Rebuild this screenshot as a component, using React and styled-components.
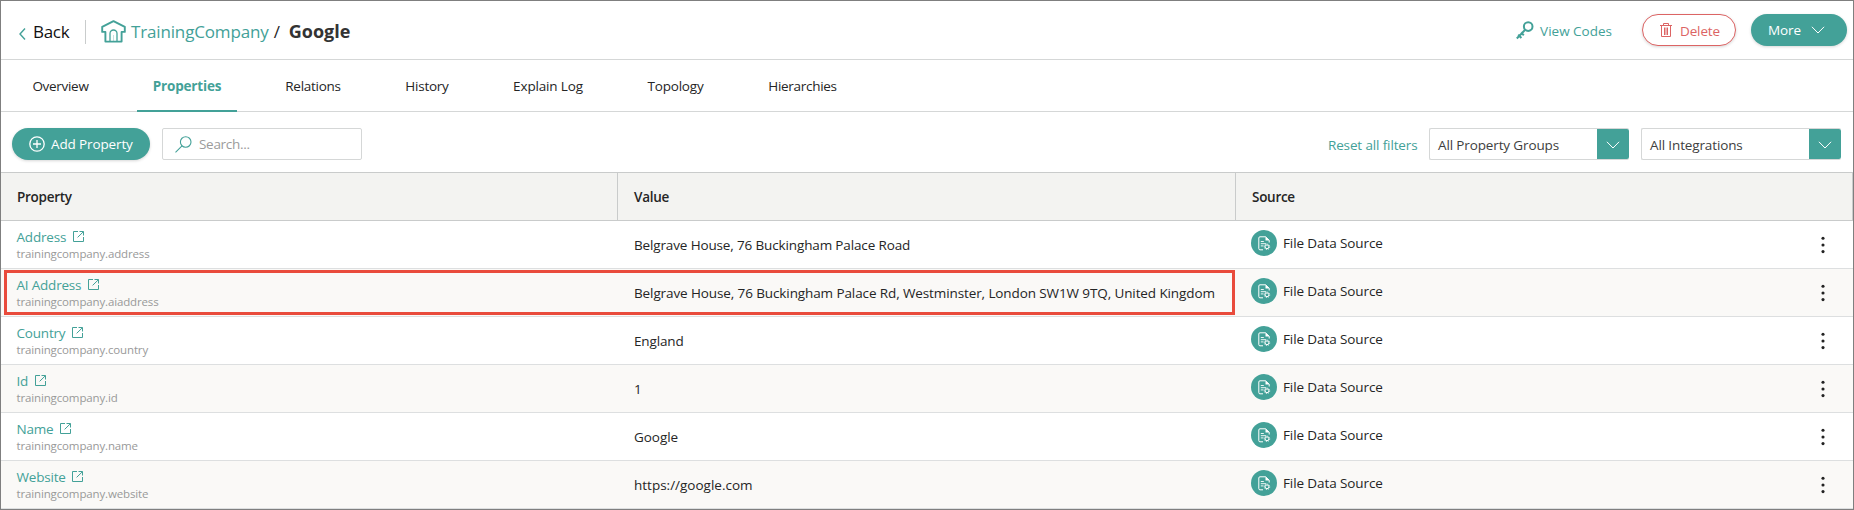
import React from "react";
import styled, { createGlobalStyle, css } from "styled-components";

const teal = "#43a198";
const line = "#d5d7d7";

const GlobalStyle = createGlobalStyle`
  * { box-sizing: border-box; }
  body {
    margin: 0;
    background: #fff;
    color: #252525;
    font-family: "Open Sans", "Noto Sans", sans-serif;
    font-size: 13.5px;
    letter-spacing: -0.13px;
  }
  button, input { font: inherit; letter-spacing: inherit; }
  svg { display: block; flex: none; }
`;

const Page = styled.div`
  display: flex;
  flex-direction: column;
  height: 510px;
  border: 1px solid #7f7f7f;
  overflow: hidden;
  white-space: nowrap;
`;

/* Header */
const Header = styled.header`
  display: flex;
  align-items: center;
  justify-content: space-between;
  height: 59px;
  flex: none;
  border-bottom: 1px solid ${line};
  padding: 0 6px 0 17px;
`;
const Breadcrumb = styled.div`
  display: flex;
  align-items: center;
  height: 24px;
  margin-top: 3px;
  font-size: 17px;
`;
const BackLink = styled.a`
  display: flex;
  align-items: center;
  gap: 7px;
  width: 68px;
  height: 24px;
  border-right: 1px solid #c9cccc;
  color: #111;
  letter-spacing: -0.3px;
  svg { margin-top: 4px; }
`;
const CategoryLink = styled.a`
  display: flex;
  align-items: center;
  gap: 5px;
  margin-left: 15px;
  color: ${teal};
  letter-spacing: -0.15px;
`;
const Slash = styled.span`
  margin: 0 9px 0 5px;
`;
const Current = styled.strong`
  font-size: 18px;
  line-height: 22px;
  padding-bottom: 1px;
  font-weight: 700;
  letter-spacing: 0;
  color: #333;
`;
const Actions = styled.div`
  display: flex;
  align-items: center;
`;
const CodesLink = styled.a`
  display: flex;
  align-items: center;
  gap: 6px;
  margin: 2px 30px 0 0;
  color: ${teal};
  letter-spacing: 0;
  svg { margin-top: -1px; }
`;
const Pill = styled.button`
  display: flex;
  align-items: center;
  width: ${(p) => p.$width}px;
  height: 32px;
  padding: 0 0 0 ${(p) => p.$pad}px;
  gap: ${(p) => p.$gap}px;
  border: 0;
  border-radius: 16px;
  background: ${teal};
  color: #fff;
  box-shadow: 0 1px 3px rgba(0, 0, 0, 0.16);
  ${(p) => p.$danger && css`
    border: 1px solid #dc6464;
    background: #fff;
    color: #dc6464;
    margin-right: 15px;
  `}
`;
const PillLabel = styled.span`
  margin-top: ${(p) => p.$drop || 0}px;
`;

/* Tabs */
const Tabs = styled.nav`
  display: flex;
  height: 52px;
  flex: none;
  gap: 32px;
  padding-left: 15px;
  border-bottom: 1px solid ${line};
`;
const Tab = styled.a`
  display: flex;
  align-items: center;
  justify-content: center;
  width: ${(p) => p.$width}px;
  height: 52px;
  padding-top: 2px;
  border-bottom: 2px solid transparent;
  letter-spacing: ${(p) => p.$spacing}px;
  ${(p) => p.$active && css`
    color: ${teal};
    font-weight: 700;
    border-color: ${teal};
  `}
`;

/* Toolbar */
const Toolbar = styled.div`
  display: flex;
  align-items: center;
  height: 60px;
  flex: none;
  padding: 4px 12px 0 11px;
`;
const SearchBox = styled.label`
  display: flex;
  align-items: center;
  gap: 7px;
  width: 200px;
  height: 32px;
  margin-left: 12px;
  padding-left: 12px;
  border: 1px solid ${line};
  border-radius: 2px;
`;
const SearchInput = styled.input`
  width: 140px;
  padding: 0;
  border: 0;
  outline: 0;
  background: none;
  letter-spacing: -0.3px;
  &::placeholder { color: #9b9b9b; opacity: 1; }
`;
const ResetLink = styled.a`
  margin: 2px 11.5px 0 auto;
  color: ${teal};
`;
const Select = styled.div`
  display: flex;
  align-items: center;
  justify-content: space-between;
  width: 200px;
  height: 32px;
  padding-left: 8px;
  border: 1px solid ${line};
  border-right: 0;
  border-radius: 2px;
  color: #404040;
  & + & { margin-left: 12px; }
`;
const SelectLabel = styled.span`
  margin-top: 2px;
`;
const SelectArrow = styled.span`
  display: flex;
  align-items: center;
  justify-content: center;
  width: 32px;
  height: 30px;
  padding-top: 2px;
  background: ${teal};
  border-radius: 0 2px 2px 0;
`;

/* Table */
const rowGrid = css`
  display: grid;
  grid-template-columns: 617px 618px 617px;
`;
const TableHead = styled.div`
  ${rowGrid}
  flex: none;
  height: 49px;
  border-top: 1px solid #c9cbcb;
  border-bottom: 1px solid #c9cbcb;
  background: #f3f3f1;
`;
const HeadCell = styled.div`
  display: flex;
  align-items: center;
  padding: 1px 0 0 16px;
  border-right: 1px solid #c9cbcb;
  font-weight: 600;
  letter-spacing: -0.28px;
`;
const Row = styled.div`
  ${rowGrid}
  position: relative;
  flex: none;
  height: 48px;
  border-bottom: 1px solid #dddfe0;
  background: ${(p) => (p.$striped ? "#faf9f7" : "#fff")};
`;
const PropertyCell = styled.div`
  display: flex;
  flex-direction: column;
  padding: 7px 0 0 15.5px;
`;
const PropertyName = styled.a`
  display: flex;
  align-items: center;
  gap: 6.5px;
  height: 17px;
  color: ${teal};
  letter-spacing: -0.2px;
`;
const PropertyKey = styled.span`
  height: 16px;
  margin-top: 1px;
  line-height: 16px;
  font-size: 11.5px;
  letter-spacing: -0.14px;
  color: #999;
`;
const ValueCell = styled.div`
  display: flex;
  align-items: center;
  padding: 1px 0 0 16px;
  letter-spacing: ${(p) => p.$spacing}px;
`;
const SourceCell = styled.div`
  display: flex;
  align-items: center;
  gap: 6px;
  padding: 0 28px 3px 15px;
  letter-spacing: -0.1px;
`;
const SourceBadge = styled.span`
  display: flex;
  align-items: center;
  justify-content: center;
  width: 26px;
  height: 26px;
  border-radius: 50%;
  background: ${teal};
`;
const RowMenu = styled.span`
  margin: 4px 0 0 auto;
`;
const Highlight = styled.div`
  position: absolute;
  inset: 1px auto auto 3px;
  width: 1231px;
  height: 45px;
  border: 3px solid #e94b3c;
`;

const Chevron = () => (
  <svg width="14" height="8" viewBox="0 0 14 8" fill="none" stroke="#fff" strokeWidth="1">
    <path d="M.9.8 7 7 13.100.8" />
  </svg>
);
const BackIcon = () => (
  <svg width="8" height="14" viewBox="0 0 8 14" fill="none" stroke={teal} strokeWidth="1.4">
    <path d="M7 1.500 2 7l5 5.500" />
  </svg>
);
const HouseIcon = () => (
  <svg width="25" height="23" viewBox="0 0 25 23" fill="none" stroke={teal} strokeWidth="1.9" strokeLinejoin="round">
    <path d="M12.500 1.100 1.200 6.800v5.100h3.200v9.700h16.200v-9.700h3.200V6.800Z" />
    <path d="M9 21.500v-8a3.500 3.500 0 0 1 7 0v8" strokeWidth="1.300" />
    <path d="M12.500 21v-6" strokeWidth=".6" opacity=".5" />
  </svg>
);
const KeyIcon = () => (
  <svg width="18" height="19" viewBox="0 0 18 19" fill="none" stroke={teal} strokeWidth="2">
    <circle cx="12.200" cy="5.600" r="4.300" />
    <path d="m9.200 8.800-8.400 8.700M2.200 13.600l3.200 3.400M5 11.500l2.800 2.700" />
  </svg>
);
const TrashIcon = () => (
  <svg width="12" height="15" viewBox="0 0 12 15" fill="none" stroke="#dc6464" strokeWidth="1">
    <path d="M0 2.500h12M3.500 2.500v-2h5v2M1.500 2.500v11h9v-11M4.500 4.500v7.500M7.500 4.500v7.500M6 4.500v7.500" />
  </svg>
);
const PlusIcon = () => (
  <svg width="16" height="16" viewBox="0 0 16 16" fill="none" stroke="#fff" strokeWidth="1.300">
    <circle cx="8" cy="8" r="7.200" />
    <path d="M8 4v8M4 8h8" />
  </svg>
);
const SearchIcon = () => (
  <svg width="17" height="17" viewBox="0 0 17 17" fill="none" stroke={teal} strokeWidth="1.100">
    <circle cx="10.700" cy="6" r="5.300" />
    <path d="M7 9.800.5 16.300" />
  </svg>
);
const OpenIcon = () => (
  <svg width="11" height="11" viewBox="0 0 11 11" fill="none" stroke={teal}>
    <path d="M5 .5H.5v10h10V6" />
    <path d="M6.500.5h4v4M10.300.8 4.600 6.400" />
  </svg>
);
const FileGearIcon = () => (
  <svg width="13" height="15" viewBox="0 0 13 15" fill="none" stroke="#fff">
    <path d="M5 13.800H2a1.200 1.200 0 0 1-1.200-1.200V2A1.200 1.200 0 0 1 2 .800h5.600L11.200 4.200V6.500" strokeWidth="1" />
    <path d="M7.500.6v3.800h3.900Z" fill="#fff" stroke="none" />
    <path d="M2.800 5.500h3M2.800 7.700h5.400M2.800 9.900h2.700" strokeWidth=".9" />
    <circle cx="9" cy="10.800" r="1.900" strokeWidth="1" />
    <circle cx="9" cy="10.800" r="2.700" strokeWidth=".9" strokeDasharray="1.060 1.060" />
  </svg>
);
const DotsIcon = () => (
  <svg width="4" height="18" viewBox="0 0 4 18" fill="#222">
    <circle cx="2" cy="2.300" r="1.550" />
    <circle cx="2" cy="9" r="1.550" />
    <circle cx="2" cy="15.600" r="1.550" />
  </svg>
);

const tabs = [
  { label: "Overview", width: 89, spacing: -0.3 },
  { label: "Properties", width: 100, spacing: -0.17, active: true },
  { label: "Relations", width: 88, spacing: -0.27 },
  { label: "History", width: 76, spacing: -0.25 },
  { label: "Explain Log", width: 102, spacing: -0.15 },
  { label: "Topology", width: 89, spacing: -0.2 },
  { label: "Hierarchies", width: 101, spacing: -0.3 },
];

const rows = [
  { name: "Address", key: "trainingcompany.address", value: "Belgrave House, 76 Buckingham Palace Road", spacing: -0.14 },
  { name: "AI Address", key: "trainingcompany.aiaddress", value: "Belgrave House, 76 Buckingham Palace Rd, Westminster, London SW1W 9TQ, United Kingdom", spacing: -0.105, highlighted: true },
  { name: "Country", key: "trainingcompany.country", value: "England", spacing: -0.14 },
  { name: "Id", key: "trainingcompany.id", value: "1", spacing: 0 },
  { name: "Name", key: "trainingcompany.name", value: "Google", spacing: -0.05 },
  { name: "Website", key: "trainingcompany.website", value: "https://google.com", spacing: 0 },
];

export default function App() {
  return (
    <Page>
      <GlobalStyle />
      <Header>
        <Breadcrumb>
          <BackLink><BackIcon />Back</BackLink>
          <CategoryLink><HouseIcon />TrainingCompany</CategoryLink>
          <Slash>/</Slash>
          <Current>Google</Current>
        </Breadcrumb>
        <Actions>
          <CodesLink><KeyIcon />View Codes</CodesLink>
          <Pill $width={94} $pad={17} $gap={8} $danger><TrashIcon /><PillLabel $drop={2}>Delete</PillLabel></Pill>
          <Pill $width={96} $pad={17} $gap={10}><PillLabel>More</PillLabel><Chevron /></Pill>
        </Actions>
      </Header>
      <Tabs>
        {tabs.map((t) => (
          <Tab key={t.label} $width={t.width} $spacing={t.spacing} $active={t.active}>{t.label}</Tab>
        ))}
      </Tabs>
      <Toolbar>
        <Pill $width={138} $pad={17} $gap={6}><PlusIcon /><PillLabel>Add Property</PillLabel></Pill>
        <SearchBox><SearchIcon /><SearchInput placeholder="Search..." /></SearchBox>
        <ResetLink>Reset all filters</ResetLink>
        <Select><SelectLabel>All Property Groups</SelectLabel><SelectArrow><Chevron /></SelectArrow></Select>
        <Select><SelectLabel>All Integrations</SelectLabel><SelectArrow><Chevron /></SelectArrow></Select>
      </Toolbar>
      <TableHead>
        <HeadCell>Property</HeadCell>
        <HeadCell>Value</HeadCell>
        <HeadCell>Source</HeadCell>
      </TableHead>
      {rows.map((r, i) => (
        <Row key={r.key} $striped={i % 2 === 1}>
          <PropertyCell>
            <PropertyName>{r.name}<OpenIcon /></PropertyName>
            <PropertyKey>{r.key}</PropertyKey>
          </PropertyCell>
          <ValueCell $spacing={r.spacing}>{r.value}</ValueCell>
          <SourceCell>
            <SourceBadge><FileGearIcon /></SourceBadge>
            File Data Source
            <RowMenu><DotsIcon /></RowMenu>
          </SourceCell>
          {r.highlighted && <Highlight />}
        </Row>
      ))}
    </Page>
  );
}
